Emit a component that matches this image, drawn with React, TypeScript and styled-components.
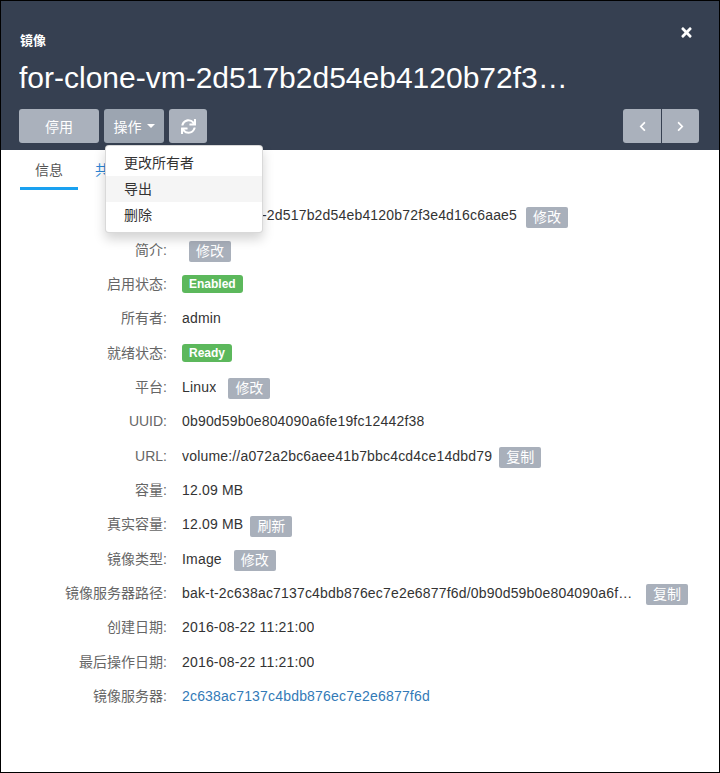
import React from "react";
import styled, { createGlobalStyle } from "styled-components";
import { FaTimes, FaSync, FaChevronLeft, FaChevronRight } from "react-icons/fa";

const GlobalStyle = createGlobalStyle`
  html, body {
    margin: 0;
    padding: 0;
    background: #ffffff;
  }
  body {
    font-family: "Liberation Sans", "Noto Sans CJK SC", sans-serif;
    font-size: 14px;
    color: #333333;
  }
  * {
    box-sizing: border-box;
  }
`;

const Frame = styled.div`
  width: 720px;
  height: 773px;
  border: 1px solid #000000;
  background: #ffffff;
  position: relative;
  overflow: hidden;
`;

const Header = styled.div`
  background: #364051;
  padding: 30px 20px 7px 18px;
  position: relative;
`;

const Kicker = styled.div`
  color: #ffffff;
  font-size: 13px;
  font-weight: bold;
  line-height: 20px;
  padding-left: 1px;
`;

const Title = styled.h1`
  margin: 7px 0 0 0;
  width: 550px;
  color: #ffffff;
  font-size: 30px;
  font-weight: normal;
  line-height: 40px;
  white-space: nowrap;
  overflow: hidden;
  text-overflow: ellipsis;
`;

const CloseButton = styled.button`
  position: absolute;
  top: 24px;
  right: 25px;
  background: none;
  border: 0;
  padding: 0;
  color: #ffffff;
  display: flex;
  cursor: pointer;
`;

const Toolbar = styled.div`
  margin-top: 11px;
  display: flex;
  align-items: center;
  justify-content: space-between;
`;

const ButtonGroup = styled.div`
  display: flex;
  gap: 5px;
  position: relative;
`;

const HeadButton = styled.button<{ $w: number; $active?: boolean }>`
  width: ${(p) => p.$w}px;
  height: 34px;
  border: 0;
  border-radius: 3px;
  background: ${(p) => (p.$active ? "#9ca5b1" : "#aab1bc")};
  color: #ffffff;
  font-family: inherit;
  font-size: 14px;
  display: flex;
  align-items: center;
  justify-content: center;
  gap: 5px;
  padding: 0;
`;

const Caret = styled.span`
  width: 0;
  height: 0;
  border-left: 4px solid transparent;
  border-right: 4px solid transparent;
  border-top: 4px solid #ffffff;
`;

const NavGroup = styled.div`
  display: flex;
  border-radius: 3px;
  overflow: hidden;
`;

const NavButton = styled.button<{ $divider?: boolean }>`
  width: 38px;
  height: 34px;
  border: 0;
  border-left: ${(p) => (p.$divider ? "1px solid #364051" : "0")};
  background: #aab1bc;
  color: #ffffff;
  display: flex;
  align-items: center;
  justify-content: center;
  padding: 0;
`;

const Menu = styled.ul`
  position: absolute;
  top: 36px;
  left: 86px;
  width: 158px;
  margin: 0;
  padding: 4px 0;
  list-style: none;
  background: #ffffff;
  border: 1px solid rgba(0, 0, 0, 0.15);
  border-radius: 4px;
  box-shadow: 0 6px 12px rgba(0, 0, 0, 0.175);
  z-index: 10;
`;

const MenuItem = styled.li<{ $hover?: boolean }>`
  padding: 3px 18px;
  line-height: 20px;
  font-size: 14px;
  color: #333333;
  background: ${(p) => (p.$hover ? "#f5f5f5" : "transparent")};
`;

const Tabs = styled.div`
  display: flex;
  gap: 2px;
  padding: 0 19px;
`;

const Tab = styled.div<{ $active?: boolean }>`
  padding: 10px 15px 7px;
  line-height: 20px;
  font-size: 14px;
  color: ${(p) => (p.$active ? "#555555" : "#2a86d6")};
  border-bottom: 3px solid ${(p) => (p.$active ? "#1aa1f0" : "transparent")};
`;

const Details = styled.div`
  margin-top: 8px;
`;

const Row = styled.div`
  display: flex;
  align-items: center;
  height: 34.35px;
`;

const Label = styled.div`
  width: 181px;
  padding-right: 15px;
  text-align: right;
  color: #666666;
  line-height: 20px;
  flex-shrink: 0;
`;

const Value = styled.div<{ $max?: number; $link?: boolean }>`
  line-height: 20px;
  letter-spacing: 0.18px;
  color: ${(p) => (p.$link ? "#337ab7" : "#333333")};
  white-space: nowrap;
  overflow: hidden;
  text-overflow: ellipsis;
  max-width: ${(p) => (p.$max ? `${p.$max}px` : "none")};
`;

const SmallButton = styled.span<{ $gap: number }>`
  margin-left: ${(p) => p.$gap}px;
  transform: translateY(2px);
  height: 21px;
  padding: 0 7px;
  border-radius: 2px;
  background: #a9b0bb;
  color: #ffffff;
  font-size: 14px;
  line-height: 21px;
`;

const Status = styled.span`
  height: 18px;
  padding: 0 7px;
  border-radius: 3px;
  background: #5cb85c;
  color: #ffffff;
  font-size: 12px;
  font-weight: bold;
  line-height: 18px;
`;

type Field = {
  label: string;
  value?: string;
  action?: string;
  gap?: number;
  status?: string;
  max?: number;
  link?: boolean;
};

const fields: Field[] = [
  { label: "名称:", value: "for-clone-vm-2d517b2d54eb4120b72f3e4d16c6aae5", action: "修改", gap: 9 },
  { label: "简介:", action: "修改", gap: 7 },
  { label: "启用状态:", status: "Enabled" },
  { label: "所有者:", value: "admin" },
  { label: "就绪状态:", status: "Ready" },
  { label: "平台:", value: "Linux", action: "修改", gap: 12 },
  { label: "UUID:", value: "0b90d59b0e804090a6fe19fc12442f38" },
  { label: "URL:", value: "volume://a072a2bc6aee41b7bbc4cd4ce14dbd79", action: "复制", gap: 7 },
  { label: "容量:", value: "12.09 MB" },
  { label: "真实容量:", value: "12.09 MB", action: "刷新", gap: 7 },
  { label: "镜像类型:", value: "Image", action: "修改", gap: 12 },
  {
    label: "镜像服务器路径:",
    value: "bak-t-2c638ac7137c4bdb876ec7e2e6877f6d/0b90d59b0e804090a6fe19fc12442f38",
    action: "复制",
    gap: 6,
    max: 458,
  },
  { label: "创建日期:", value: "2016-08-22 11:21:00" },
  { label: "最后操作日期:", value: "2016-08-22 11:21:00" },
  { label: "镜像服务器:", value: "2c638ac7137c4bdb876ec7e2e6877f6d", link: true },
];

export default function App() {
  return (
    <>
      <GlobalStyle />
      <Frame>
        <Header>
          <Kicker>镜像</Kicker>
          <Title>for-clone-vm-2d517b2d54eb4120b72f3e4d16c6aae5</Title>
          <CloseButton>
            <FaTimes size={15} />
          </CloseButton>
          <Toolbar>
            <ButtonGroup>
              <HeadButton $w={80}>停用</HeadButton>
              <HeadButton $w={60} $active>
                操作 <Caret />
              </HeadButton>
              <HeadButton $w={38}>
                <FaSync size={15} />
              </HeadButton>
              <Menu>
                <MenuItem>更改所有者</MenuItem>
                <MenuItem $hover>导出</MenuItem>
                <MenuItem>删除</MenuItem>
              </Menu>
            </ButtonGroup>
            <NavGroup>
              <NavButton>
                <FaChevronLeft size={11} />
              </NavButton>
              <NavButton $divider>
                <FaChevronRight size={11} />
              </NavButton>
            </NavGroup>
          </Toolbar>
        </Header>
        <Tabs>
          <Tab $active>信息</Tab>
          <Tab>共享</Tab>
        </Tabs>
        <Details>
          {fields.map((f) => (
            <Row key={f.label}>
              <Label>{f.label}</Label>
              {f.status && <Status>{f.status}</Status>}
              {f.value && (
                <Value $max={f.max} $link={f.link}>
                  {f.value}
                </Value>
              )}
              {f.action && <SmallButton $gap={f.gap ?? 8}>{f.action}</SmallButton>}
            </Row>
          ))}
        </Details>
      </Frame>
    </>
  );
}
